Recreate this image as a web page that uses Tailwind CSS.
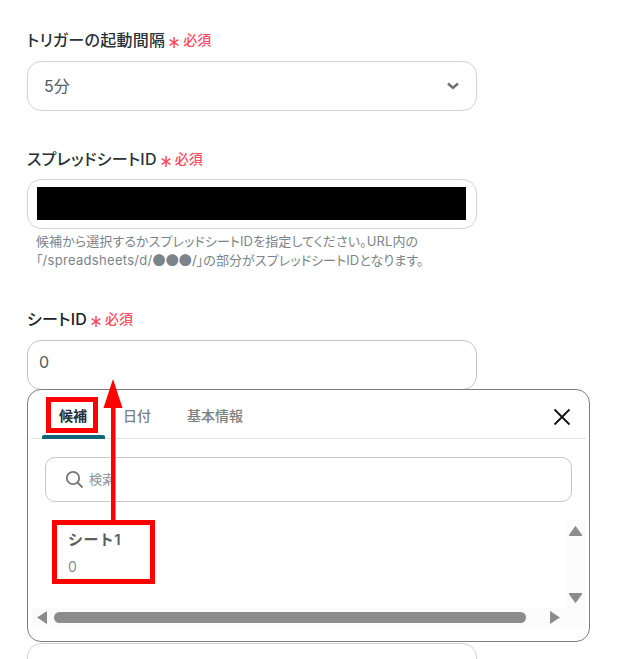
<!DOCTYPE html>
<html lang="ja">
<head>
<meta charset="utf-8">
<script src="https://cdn.jsdelivr.net/npm/@tailwindcss/browser@4"></script>
</head>
<body class="bg-white">
<div class="relative w-[617px] h-[659px] overflow-hidden bg-white font-['Inter','Noto_Sans_CJK_JP',sans-serif] text-[#283237]">
  <div class="flex flex-col pl-[27px] pt-[30px] w-[477px]">
    <div class="flex items-center h-[20px] text-[16px] font-medium leading-[20px] tracking-[0.25px] [font-feature-settings:'palt']">
      <span>トリガーの起動間隔</span>
      <svg class="ml-[4px] mt-[5px]" width="10" height="11" viewBox="0 0 10 11" fill="none"><path d="M5 0 V11 M0.6 2.6 L9.4 8.4 M9.4 2.6 L0.6 8.4" stroke="#ff4b61" stroke-width="1.5"/></svg>
      <span class="ml-[4px] text-[14px] tracking-normal text-[#ff4b61]">必須</span>
    </div>
    <div class="mt-[11px] h-[50px] border border-[#d0d3dc] rounded-[14px] flex items-center justify-between pl-[16px] pr-[16px] text-[16px] text-[#4f5b63]">
      <span class="pb-[1px]">5分</span>
      <svg width="14" height="10" viewBox="0 0 14 10" fill="none"><path d="M2 2.5 L7 7 L12 2.5" stroke="#6e6e6e" stroke-width="2.4"/></svg>
    </div>
    <div class="mt-[38px] flex items-center h-[20px] text-[16px] font-medium leading-[20px] tracking-[0.25px] [font-feature-settings:'palt']">
      <span>スプレッドシートID</span>
      <svg class="ml-[4px] mt-[5px]" width="10" height="11" viewBox="0 0 10 11" fill="none"><path d="M5 0 V11 M0.6 2.6 L9.4 8.4 M9.4 2.6 L0.6 8.4" stroke="#ff4b61" stroke-width="1.5"/></svg>
      <span class="ml-[4px] text-[14px] tracking-normal text-[#ff4b61]">必須</span>
    </div>
    <div class="mt-[10px] h-[50px] border border-[#d0d3dc] rounded-[14px] pl-[9px] pr-[10px] pt-[7px]">
      <div class="w-full h-[33px] bg-black"></div>
    </div>
    <div class="mt-[3px] pl-[9px] text-[13px] leading-[18.5px] text-[#7b848a] w-[450px] tracking-[0.1px] [font-feature-settings:'palt']">
      <p class="whitespace-nowrap">候補から選択するかスプレッドシートIDを指定してください。URL内の</p>
      <p class="whitespace-nowrap">「<span class="tracking-[0.3px]">/spreadsheets/d/</span><span class="font-['Noto_Sans_CJK_JP']">●●●</span>/」の部分がスプレッドシートIDとなります。</p>
    </div>
    <div class="mt-[40px] flex items-center h-[20px] text-[16px] font-medium leading-[20px] tracking-[0.25px] [font-feature-settings:'palt']">
      <span class="text-[#1b2024]">シートID</span>
      <svg class="ml-[4px] mt-[5px]" width="10" height="11" viewBox="0 0 10 11" fill="none"><path d="M5 0 V11 M0.6 2.6 L9.4 8.4 M9.4 2.6 L0.6 8.4" stroke="#ff4b61" stroke-width="1.5"/></svg>
      <span class="ml-[4px] text-[14px] tracking-normal text-[#ff4b61]">必須</span>
    </div>
    <div class="mt-[11px] h-[50px] border border-[#c4c4c4] rounded-[14px] flex items-center pl-[11px] pb-[7px] text-[16px] text-[#4f5b63]">0</div>
    <div class="mt-[253px] h-[50px] border border-[#d0d3dc] rounded-[14px]"></div>
  </div>

  <!-- popover -->
  <div class="absolute left-[27px] top-[389px] w-[563px] h-[253px] bg-white border border-[#7d7d7d] rounded-[14px] px-[3px]">
    <div class="relative flex h-[49px] border-b border-[#e3e3e3]">
      <div class="absolute left-[11px] bottom-[-1px] w-[63px] h-[4px] bg-[#0e6478] rounded-t-[2px]"></div>
      <div class="absolute left-[28px] top-[16px] text-[14px] leading-[20px] font-semibold text-[#283237]">候補</div>
      <div class="absolute left-[92px] top-[16px] text-[14px] leading-[20px] font-medium text-[#7b7f82]">日付</div>
      <div class="absolute left-[156px] top-[16px] text-[14px] leading-[20px] font-medium text-[#7b7f82]">基本情報</div>
      <svg class="absolute left-[522px] top-[18px]" width="18" height="18" viewBox="0 0 18 18" fill="none"><path d="M1.5 1.5 L16.5 16.5 M16.5 1.5 L1.5 16.5" stroke="#111" stroke-width="1.8"/></svg>
    </div>
    <div class="mt-[18px] ml-[14px] w-[527px] h-[45px] border border-[#c8c8c8] rounded-[10px] flex items-center pl-[19px]">
      <svg width="19" height="19" viewBox="0 0 19 19" fill="none"><circle cx="8" cy="8" r="6.2" stroke="#777" stroke-width="1.8"/><path d="M12.5 12.5 L17.5 17.5" stroke="#777" stroke-width="1.8"/></svg>
      <span class="ml-[5px] pt-[1px] text-[13px] text-[#8b9398]">検索</span>
    </div>
    <div class="relative mt-[18px] h-[107px]">
      <div class="absolute left-[37px] top-[10px] text-[15px] leading-[20px] font-semibold tracking-[0.4px] text-[#5a5f63]">シート1</div>
      <div class="absolute left-[37px] top-[37px] text-[14px] leading-[20px] text-[#8a8f93]">0</div>
      <!-- vertical scrollbar -->
      <div class="absolute right-0 top-0 w-[19px] h-[88px] bg-[#fbfbfb] flex flex-col justify-between items-center pt-[6px] pb-[5px] pr-[2px]">
        <svg width="13" height="10" viewBox="0 0 13 10"><path d="M6.5 0.5 L13 9.5 H0 Z" fill="#8c8c8c" stroke="#8c8c8c" stroke-linejoin="round"/></svg>
        <svg width="13" height="10" viewBox="0 0 13 10"><path d="M6.5 9.5 L13 0.5 H0 Z" fill="#8c8c8c" stroke="#8c8c8c" stroke-linejoin="round"/></svg>
      </div>
      <!-- horizontal scrollbar -->
      <div class="absolute left-0 right-0 top-[88px] h-[19px] bg-[#fbfbfb] flex items-center pl-[6px] pr-[26px]">
        <svg width="10" height="13" viewBox="0 0 10 13"><path d="M0 6.5 L10 0 V13 Z" fill="#8c8c8c"/></svg>
        <div class="ml-[7px] w-[472px] h-[11px] rounded-full bg-[#8c8c8c]"></div>
        <svg class="ml-auto" width="10" height="13" viewBox="0 0 10 13"><path d="M10 6.5 L0 0 V13 Z" fill="#8c8c8c"/></svg>
      </div>
    </div>
  </div>

  <!-- red annotations -->
  <div class="absolute left-[46px] top-[397px] w-[52px] h-[36px] border-[5px] border-[#ff0000]"></div>
  <div class="absolute left-[52px] top-[520px] w-[103px] h-[64px] border-[5px] border-[#ff0000]"></div>
  <svg class="absolute left-[103px] top-[379px]" width="20" height="142" viewBox="0 0 20 142"><path d="M10 0 L19.5 29 H12.5 V141 H8 V29 H0.5 Z" fill="#ff0000"/></svg>
</div>
</body>
</html>
